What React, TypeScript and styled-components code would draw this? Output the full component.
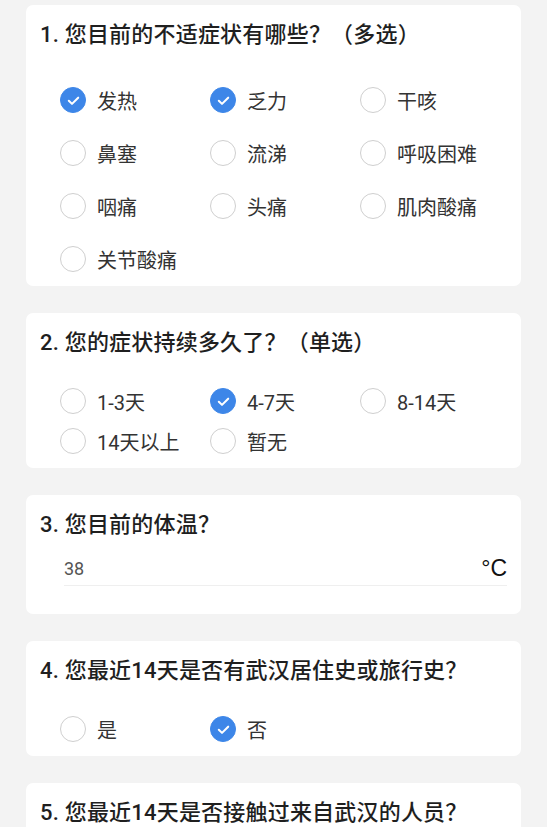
import React, { useState } from 'react';
import styled, { createGlobalStyle } from 'styled-components';

const GlobalStyle = createGlobalStyle`
  html, body {
    margin: 0;
    padding: 0;
    background: #f3f3f3;
  }
  body {
    font-family: Roboto, "Noto Sans CJK SC", sans-serif;
    color: #222;
  }
  * {
    box-sizing: border-box;
  }
`

const Page = styled.div`
  display: flex;
  flex-direction: column;
  gap: 27px;
  padding: 5px 26px 0;
  height: 827px;
  overflow: hidden;
`

const Card = styled.section`
  background: #fff;
  border-radius: 7px;
  padding: 16px 14px 7px 14px;
  flex-shrink: 0;
`

const Title = styled.h2`
  margin: 0;
  font-size: 22px;
  line-height: 28px;
  font-weight: 500;
  letter-spacing: 0.2px;
  color: #1f1f1f;
  white-space: nowrap;
`

const Options = styled.div<{ $top: number; $gap: number }>`
  display: grid;
  grid-template-columns: repeat(3, 150px);
  row-gap: ${({ $gap }) => $gap}px;
  margin-top: ${({ $top }) => $top}px;
  padding-left: 20px;
`

const Option = styled.label`
  display: flex;
  align-items: center;
  gap: 11px;
  height: 40px;
  font-size: 20px;
  color: #333;
  cursor: pointer;
  white-space: nowrap;
`

const Mark = styled.span<{ $on: boolean }>`
  display: flex;
  align-items: center;
  justify-content: center;
  width: 26px;
  height: 26px;
  border-radius: 50%;
  flex-shrink: 0;
  background: ${({ $on }) => ($on ? '#3d86e8' : '#fff')};
  border: 1.5px solid ${({ $on }) => ($on ? '#3d86e8' : '#cfcfcf')};
`

const Field = styled.div`
  display: flex;
  align-items: flex-end;
  justify-content: space-between;
  height: 36px;
  padding-bottom: 4px;
  margin: 11px 0 21px 24px;
  border-bottom: 1px solid #efefef;
`

const Value = styled.span`
  font-size: 18px;
  line-height: 24px;
  color: #555;
`

const Unit = styled.span`
  font-family: "Liberation Sans", Arial, sans-serif;
  font-size: 23px;
  line-height: 26px;
  color: #111;
`

const Check = () => (
  <svg width="15" height="15" viewBox="0 0 16 16" fill="none">
    <path d="M3 8.3l3.4 3.3L13 5" stroke="#fff" strokeWidth="2.2" strokeLinecap="round" strokeLinejoin="round" />
  </svg>
)

type Question = {
  title: string
  options: string[]
  multi?: boolean
  initial: string[]
  top: number
  gap: number
}

const questions: Question[] = [
  {
    title: '1. 您目前的不适症状有哪些？（多选）',
    options: ['发热', '乏力', '干咳', '鼻塞', '流涕', '呼吸困难', '咽痛', '头痛', '肌肉酸痛', '关节酸痛'],
    multi: true,
    initial: ['发热', '乏力'],
    top: 31,
    gap: 13,
  },
  {
    title: '2. 您的症状持续多久了？（单选）',
    options: ['1-3天', '4-7天', '8-14天', '14天以上', '暂无'],
    initial: ['4-7天'],
    top: 24,
    gap: 0,
  },
]

const ChoiceCard = ({ q }: { q: Question }) => {
  const [picked, setPicked] = useState<string[]>(q.initial)

  const toggle = (o: string) => {
    if (q.multi) {
      setPicked(p => (p.includes(o) ? p.filter(x => x !== o) : [...p, o]))
    } else {
      setPicked([o])
    }
  }

  return (
    <Card>
      <Title>{q.title}</Title>
      <Options $top={q.top} $gap={q.gap}>
        {q.options.map(o => (
          <Option key={o} onClick={() => toggle(o)}>
            <Mark $on={picked.includes(o)}>{picked.includes(o) && <Check />}</Mark>
            {o}
          </Option>
        ))}
      </Options>
    </Card>
  )
}

export default function App() {
  return (
    <>
      <GlobalStyle />
      <Page>
        {questions.map(q => (
          <ChoiceCard key={q.title} q={q} />
        ))}
        <Card>
          <Title>3. 您目前的体温？</Title>
          <Field>
            <Value>38</Value>
            <Unit>°C</Unit>
          </Field>
        </Card>
        <ChoiceCard
          q={{
            title: '4. 您最近14天是否有武汉居住史或旅行史？',
            options: ['是', '否'],
            initial: ['否'],
            top: 24,
            gap: 0,
          }}
        />
        <Card>
          <Title>5. 您最近14天是否接触过来自武汉的人员？</Title>
        </Card>
      </Page>
    </>
  )
}
